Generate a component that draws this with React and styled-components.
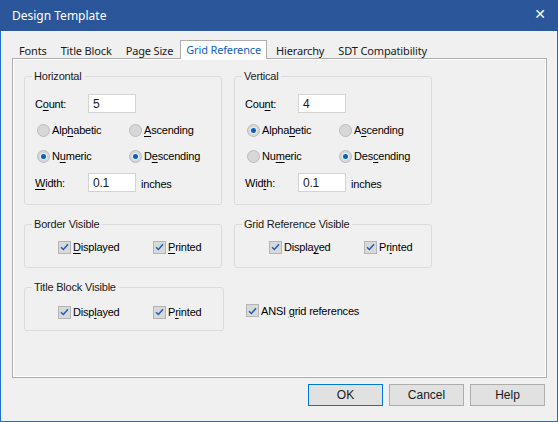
import React from "react";
import styled, { createGlobalStyle } from "styled-components";

const Global = createGlobalStyle`
  html, body { margin: 0; padding: 0; background: #f0f0f0; }
  body { font-family: "Liberation Sans", Arial, sans-serif; }
  * { box-sizing: border-box; }
`;

const Window = styled.div`
  width: 558px;
  height: 422px;
  border: 1px solid #1f6fcf;
  border-top: none;
  background: #f0f0f0;
  display: flex;
  flex-direction: column;
`;

const TitleBar = styled.div`
  height: 31px;
  margin: 0 -1px;
  background: #2b579a;
  color: #fff;
  display: flex;
  align-items: center;
  justify-content: space-between;
  padding: 0 12px 0 12px;
  font-family: "Noto Sans", "Open Sans", sans-serif;
  font-size: 12px;
`;

const Close = styled.span`
  font-family: "DejaVu Sans", sans-serif;
  font-size: 14px;
  font-weight: bold;
  margin-top: -3px;
`;

const Body = styled.div`
  flex: 1;
  display: flex;
  flex-direction: column;
  padding: 9px 10px 0 11px;
`;

const TabStrip = styled.div`
  display: flex;
  align-items: flex-end;
  height: 19px;
  margin-bottom: -1px;
  position: relative;
  z-index: 1;
`;

const Tab = styled.div`
  font-family: "Noto Sans", "Open Sans", sans-serif;
  font-size: 11px;
  letter-spacing: -0.15px;
  line-height: 17px;
  padding: 0 ${p => (p.$active ? "5px" : "6px")};
  margin: ${p => (p.$active ? "0 2px 0 0" : "0")};
  height: ${p => (p.$active ? "19px" : "18px")};
  color: ${p => (p.$active ? "#1160c6" : "#1a1a1a")};
  background: ${p => (p.$active ? "#fff" : "transparent")};
  border: 1px solid ${p => (p.$active ? "#adadad" : "transparent")};
  border-bottom: none;
  white-space: nowrap;
`;

const Panel = styled.div`
  height: 320px;
  border: 1px solid #adadad;
  box-shadow: inset 0 0 0 1px #fff;
  background: #f0f0f0;
  padding: 10px 11px;
  display: grid;
  grid-template-columns: 198px 200px;
  column-gap: 12px;
  row-gap: 12px;
  align-content: start;
  font-size: 11px;
  letter-spacing: -0.2px;
  color: #000;
`;

const Group = styled.fieldset`
  margin: 0;
  width: ${p => p.$w || 198}px;
  border: 1px solid #dcdcdc;
  border-radius: 3px;
  padding: ${p => p.$pad || "11px 8px 12px 10px"};
  min-width: 0;
`;

const Legend = styled.legend`
  font-size: 11px;
  line-height: 14px;
  padding: 0 3px 0 2px;
  margin-left: -3px;
  color: #1a1a1a;
`;

const Rows = styled.div`
  display: grid;
  grid-template-rows: 19px 18px 18px 19px;
  row-gap: 8px;
`;

const Row = styled.div`
  display: flex;
  align-items: center;
`;

const Label = styled.span`
  width: 53px;
  flex: none;
`;

const Input = styled.div`
  width: 48px;
  height: 19px;
  background: #fff;
  border: 1px solid #d4d4d4;
  padding: 0 4px;
  display: flex;
  align-items: center;
  font-size: 12px;
  color: #1a1a1a;
`;

const Unit = styled.span`
  margin-left: 5px;
  margin-top: 3px;
`;

const RadioItem = styled.label`
  width: 90px;
  display: flex;
  align-items: center;
  gap: 2px;
  margin-left: 2px;
  white-space: nowrap;
`;

const RadioDot = styled.span`
  width: 13px;
  height: 13px;
  border-radius: 50%;
  border: 1px solid #bcbcbc;
  background: #d7d7d7;
  display: flex;
  align-items: center;
  justify-content: center;
  flex: none;
  &::after {
    content: "";
    width: 5px;
    height: 5px;
    border-radius: 50%;
    background: ${p => (p.$on ? "#0a5dc2" : "transparent")};
    box-shadow: ${p => (p.$on ? "0 0 0 1px #e8eef6" : "none")};
  }
`;

const CheckRow = styled.div`
  display: flex;
  align-items: center;
  height: 16px;
  padding-left: ${p => p.$indent || 23}px;
`;

const CheckItem = styled.label`
  display: flex;
  align-items: center;
  gap: 2px;
  width: ${p => p.$w || "auto"};
  white-space: nowrap;
`;

const Box = styled.span`
  width: 13px;
  height: 13px;
  border: 1px solid #b4b4b4;
  background: #d9d9d9;
  flex: none;
  display: flex;
  align-items: center;
  justify-content: center;
`;

const Ansi = styled.div`
  padding: 24px 0 0 12px;
`;

const Footer = styled.div`
  display: flex;
  justify-content: flex-end;
  gap: 6px;
  padding: 6px 2px 0 0;
`;

const Button = styled.div`
  width: 75px;
  height: 22px;
  background: #e1e1e1;
  border: 1px solid ${p => (p.$default ? "#0078d7" : "#adadad")};
  display: flex;
  align-items: center;
  justify-content: center;
  font-size: 12px;
  color: #1a1a1a;
`;

const U = styled.u`
  text-decoration-thickness: 1px;
  text-underline-offset: 2px;
`;

function Radio({ on, children }) {
  return (
    <RadioItem>
      <RadioDot $on={on} />
      <span>{children}</span>
    </RadioItem>
  );
}

function Check({ w, children }) {
  return (
    <CheckItem $w={w}>
      <Box>
        <svg width="9" height="8" viewBox="0 0 9 8">
          <path d="M1 4.2 L3.4 6.5 L8 1.3" fill="none" stroke="#1e5fb5" strokeWidth="1.5" />
        </svg>
      </Box>
      <span>{children}</span>
    </CheckItem>
  );
}

function AxisGroup({ title, count, labels }) {
  return (
    <Group>
      <Legend>{title}</Legend>
      <Rows>
        <Row>
          <Label>{labels.count}</Label>
          <Input>{count}</Input>
        </Row>
        <Row>
          <Radio on={labels.alphaOn}>{labels.alpha}</Radio>
          <Radio>{labels.asc}</Radio>
        </Row>
        <Row>
          <Radio on={!labels.alphaOn}>{labels.num}</Radio>
          <Radio on>{labels.desc}</Radio>
        </Row>
        <Row>
          <Label>{labels.width}</Label>
          <Input>0.1</Input>
          <Unit>inches</Unit>
        </Row>
      </Rows>
    </Group>
  );
}

function VisGroup({ title, w, pad, indent, displayed, printed }) {
  return (
    <Group $w={w} $pad={pad}>
      <Legend>{title}</Legend>
      <CheckRow $indent={indent}>
        <Check w="95px">{displayed}</Check>
        <Check>{printed}</Check>
      </CheckRow>
    </Group>
  );
}

export default function App() {
  const tabs = ["Fonts", "Title Block", "Page Size", "Grid Reference", "Hierarchy", "SDT Compatibility"];
  return (
    <>
      <Global />
      <Window>
        <TitleBar>
          <span>Design Template</span>
          <Close>✕</Close>
        </TitleBar>
        <Body>
          <TabStrip>
            {tabs.map(t => (
              <Tab key={t} $active={t === "Grid Reference"}>{t}</Tab>
            ))}
          </TabStrip>
          <Panel>
            <AxisGroup
              title="Horizontal"
              count="5"
              labels={{
                count: <>C<U>o</U>unt:</>,
                alpha: <>Alp<U>h</U>abetic</>,
                asc: <><U>A</U>scending</>,
                num: <>N<U>u</U>meric</>,
                desc: <>D<U>e</U>scending</>,
                width: <><U>W</U>idth:</>,
                alphaOn: false,
              }}
            />
            <AxisGroup
              title="Vertical"
              count="4"
              labels={{
                count: <>Cou<U>n</U>t:</>,
                alpha: <>Alpha<U>b</U>etic</>,
                asc: <>A<U>s</U>cending</>,
                num: <>Nu<U>m</U>eric</>,
                desc: <>Des<U>c</U>ending</>,
                width: <>Wid<U>t</U>h:</>,
                alphaOn: true,
              }}
            />
            <VisGroup
              title="Border Visible"
              pad="8px 8px 12px 10px"
              indent={23}
              displayed={<><U>D</U>isplayed</>}
              printed={<><U>P</U>rinted</>}
            />
            <VisGroup
              title="Grid Reference Visible"
              pad="8px 8px 12px 10px"
              indent={24}
              displayed={<>Displa<U>y</U>ed</>}
              printed={<>Pr<U>i</U>nted</>}
            />
            <VisGroup
              title="Title Block Visible"
              w={200}
              pad="10px 8px 10px 10px"
              indent={23}
              displayed={<>Disp<U>l</U>ayed</>}
              printed={<>P<U>r</U>inted</>}
            />
            <Ansi>
              <Check>ANSI <U>g</U>rid references</Check>
            </Ansi>
          </Panel>
          <Footer>
            <Button $default>OK</Button>
            <Button>Cancel</Button>
            <Button>Help</Button>
          </Footer>
        </Body>
      </Window>
    </>
  );
}
